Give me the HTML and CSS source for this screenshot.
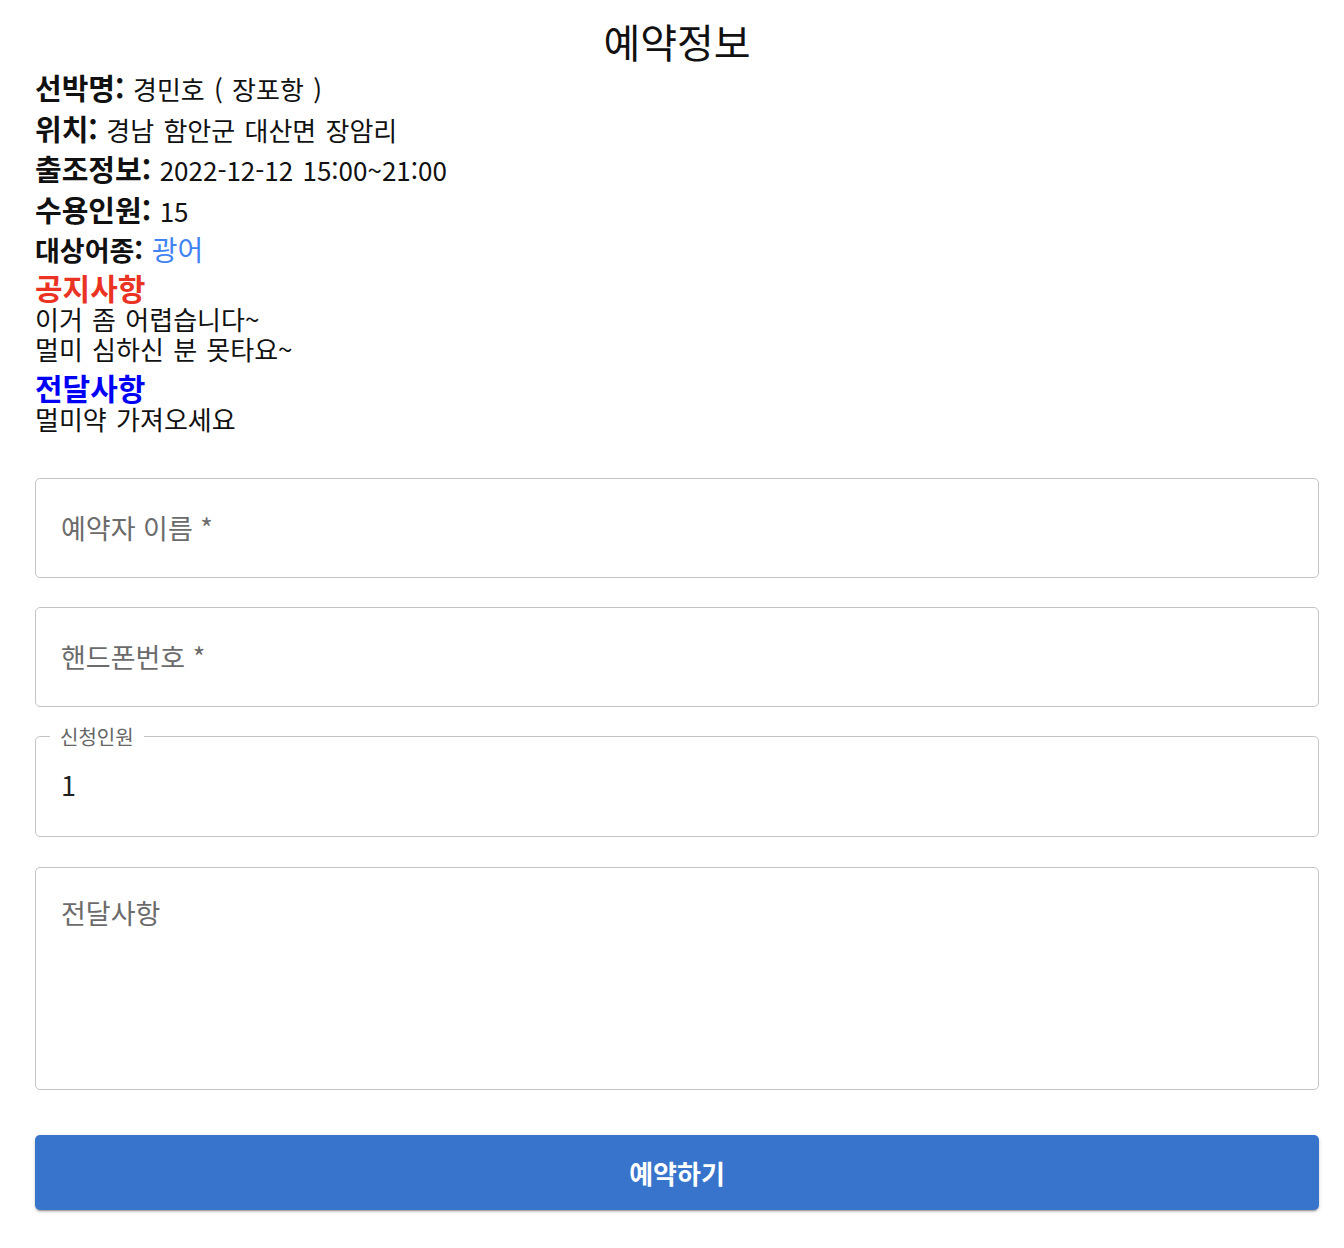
FILE: index.html
```html
<!DOCTYPE html>
<html lang="ko">
<head>
  <meta charset="UTF-8">
  <meta name="viewport" content="width=device-width, initial-scale=1.0">
  <title>예약정보</title>
  <link rel="stylesheet" href="styles.css">
</head>
<body>
  <div class="page">
    <h1 class="title">예약정보</h1>

    <div class="info">
      <div class="info-row"><b class="label">선박명:</b> <span class="value">경민호 ( 장포항 )</span></div>
      <div class="info-row"><b class="label">위치:</b> <span class="value">경남 함안군 대산면 장암리</span></div>
      <div class="info-row"><b class="label">출조정보:</b> <span class="value">2022-12-12 15:00~21:00</span></div>
      <div class="info-row"><b class="label">수용인원:</b> <span class="value">15</span></div>
      <div class="info-row"><b class="label label-sm">대상어종:</b> <span class="value fish">광어</span></div>
    </div>

    <div class="notice">
      <h3 class="notice-title notice-red">공지사항</h3>
      <p class="notice-text">이거 좀 어렵습니다~<br>멀미 심하신 분 못타요~</p>
    </div>

    <div class="notice notice-gap">
      <h3 class="notice-title notice-blue">전달사항</h3>
      <p class="notice-text">멀미약 가져오세요</p>
    </div>

    <form class="reserve-form" onsubmit="return false;">
      <input class="field" type="text" placeholder="예약자 이름 *">
      <input class="field" type="tel" placeholder="핸드폰번호 *">
      <fieldset class="count-box">
        <legend>신청인원</legend>
        <input class="count-input" type="number" value="1">
      </fieldset>
      <textarea class="field memo" placeholder="전달사항"></textarea>
      <button class="submit-btn" type="submit">예약하기</button>
    </form>
  </div>
</body>
</html>
```

FILE: styles.css
```css
* {
  margin: 0;
  padding: 0;
  box-sizing: border-box;
}

body {
  font-family: "Noto Sans CJK KR", "Noto Sans", sans-serif;
  background: #ffffff;
  color: #111111;
}

.page {
  padding: 0 25px 40px 35px;
}

.title {
  text-align: center;
  font-size: 40px;
  font-weight: 400;
  line-height: 44px;
  margin: 19px 0 4px;
  color: #111111;
}

.info-row {
  line-height: 40.5px;
  height: 40.5px;
  white-space: nowrap;
}

.label {
  font-size: 29px;
  font-weight: 700;
}

.label-sm {
  font-size: 27px;
}

.value {
  margin-left: 4px;
  font-size: 26px;
  word-spacing: 2px;
}

.fish {
  font-size: 28px;
  color: #4283f3;
}

.notice-title {
  font-size: 30px;
  font-weight: 700;
  line-height: 34px;
}

.notice-red {
  color: #ea3323;
}

.notice-blue {
  color: #0000f5;
}

.notice-gap {
  margin-top: 6px;
}

.notice-text {
  font-size: 26px;
  line-height: 30px;
  word-spacing: 2px;
}

.reserve-form {
  margin-top: 44px;
  display: flex;
  flex-direction: column;
  gap: 29px;
}

.field {
  width: 100%;
  height: 100px;
  padding: 0 25px;
  border: 1px solid #c4c4c4;
  border-radius: 5px;
  font-family: inherit;
  font-size: 27px;
  color: #212121;
  background: #ffffff;
  outline: none;
}

.field::placeholder {
  color: #6b6b6b;
}

.count-box {
  margin: -9px 0 0;
  padding: 0 0 0 14px;
  border: 1px solid #c4c4c4;
  border-radius: 5px;
  min-width: 0;
}

.count-box legend {
  padding: 0 10px;
  font-size: 20px;
  line-height: 20px;
  color: #666666;
}

.count-input {
  display: block;
  width: 100%;
  height: 89px;
  padding: 0 11px 14px;
  border: none;
  outline: none;
  font-family: inherit;
  font-size: 27px;
  color: #212121;
  background: transparent;
  -moz-appearance: textfield;
}

.count-input::-webkit-inner-spin-button,
.count-input::-webkit-outer-spin-button {
  -webkit-appearance: none;
  margin: 0;
}

.memo {
  height: 223px;
  margin-top: 1px;
  padding: 27px 25px;
  line-height: 1.3;
  resize: none;
}

.submit-btn {
  margin-top: 16px;
  height: 75px;
  width: 100%;
  border: none;
  border-radius: 5px;
  background: #3874cb;
  color: #ffffff;
  font-family: inherit;
  font-size: 26px;
  font-weight: 700;
  cursor: pointer;
  box-shadow: 0 3px 1px -2px rgba(0, 0, 0, 0.2), 0 2px 2px 0 rgba(0, 0, 0, 0.14), 0 1px 5px 0 rgba(0, 0, 0, 0.12);
}

.submit-btn:hover {
  background: #2f66b5;
}
```
